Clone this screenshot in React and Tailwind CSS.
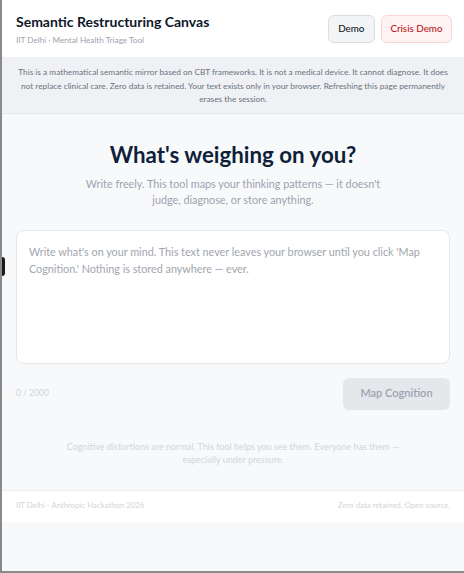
export default function App() {
  return (
    <div
      className="relative flex h-[573px] w-[464px] flex-col overflow-hidden border-b-2 border-l-2 border-[#8a8a8a] bg-[#f8f9fb]"
      style={{ fontFamily: 'Lato, "Noto Sans", sans-serif' }}
    >
      <div className="absolute left-0 top-[257px] h-[19px] w-[3px] rounded-r-sm bg-[#1a1a1a]" />
      <header className="flex h-[57px] items-center justify-between bg-white pl-[14px] pr-[12px]">
        <div className="flex flex-col">
          <h1 className="text-[14px] font-bold leading-[19px] text-[#0f172a]">Semantic Restructuring Canvas</h1>
          <p className="mt-[4px] text-[8.2px] leading-[11px] text-[#9ca3af]">IIT Delhi · Mental Health Triage Tool</p>
        </div>
        <div className="flex gap-[6px]">
          <button className="h-[28px] rounded-[6px] border border-[#d9dde3] bg-[#f3f4f6] px-[9.5px] text-[9.8px] font-medium text-[#111827]">Demo</button>
          <button className="h-[28px] rounded-[6px] border border-[#f9d5d5] bg-[#fef2f2] px-[8.5px] text-[9.8px] font-medium text-[#b91c1c]">Crisis Demo</button>
        </div>
      </header>
      <div className="border-b border-[#e5e7eb] bg-[#f0f1f4] px-[14px] pb-[6px] pt-[9px] text-center text-[8.3px] leading-[13.5px] text-[#6b7280]">
        This is a mathematical semantic mirror based on CBT frameworks. It is not a medical device. It cannot diagnose. It does not replace clinical care. Zero data is retained. Your text exists only in your browser. Refreshing this page permanently erases the session.
      </div>
      <main className="flex flex-col px-[14px] pt-[27px]">
        <h2 className="text-center text-[22.3px] font-bold leading-[28px] text-[#0f1f3a]">What's weighing on you?</h2>
        <p className="mx-auto mt-[7px] w-[310px] text-center text-[10.8px] leading-[16px] text-[#9ca3af]">
          Write freely. This tool maps your thinking patterns — it doesn't judge, diagnose, or store anything.
        </p>
        <textarea
          className="mt-[22px] h-[134px] resize-none rounded-[8px] border border-[#e5e7eb] bg-white px-[12px] py-[12px] text-[10.8px] leading-[17px] text-[#374151] outline-none placeholder:text-[#a1a6ae]"
          placeholder="Write what's on your mind. This text never leaves your browser until you click 'Map Cognition.' Nothing is stored anywhere — ever."
        />
        <div className="mt-[14px] flex items-center justify-between">
          <span className="text-[8.5px] text-[#d1d5db]">0 / 2000</span>
          <button className="h-[32px] w-[107px] rounded-[6px] bg-[#e5e7eb] text-[11px] font-semibold text-[#9ca3af]">Map Cognition</button>
        </div>
        <p className="mx-auto mt-[30px] w-[345px] text-center text-[9px] leading-[13px] text-[#d1d5db]">
          Cognitive distortions are normal. This tool helps you see them. Everyone has them — especially under pressure.
        </p>
      </main>
      <footer className="mt-[24px] flex h-[32px] items-center justify-between border-t border-[#eceef1] bg-white px-[14px] text-[7.8px] text-[#d1d5db]">
        <span>IIT Delhi - Anthropic Hackathon 2026</span>
        <span>Zero data retained. Open source.</span>
      </footer>
    </div>
  );
}
